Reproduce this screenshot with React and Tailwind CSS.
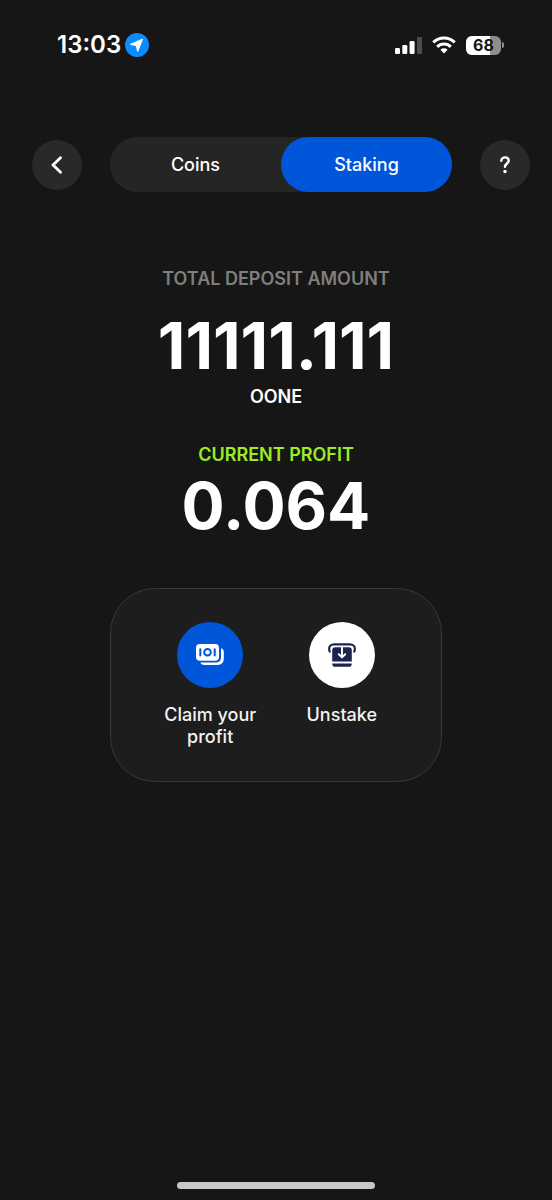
import { useState } from 'react';

const tabs = ['Coins', 'Staking'];

function SignalIcon() {
    return (
        <svg width="27" height="17" viewBox="0 0 27 17" fill="#fff" aria-hidden="true">
            <rect x="0" y="11" width="5" height="6" rx="1.3" />
            <rect x="7.3" y="8" width="5" height="9" rx="1.3" />
            <rect x="14.6" y="4" width="5" height="13" rx="1.3" />
            <rect x="22" y="0" width="5" height="17" rx="1.3" fill="#4d4d4d" />
        </svg>
    );
}

function WifiIcon() {
    return (
        <svg width="24" height="18" viewBox="0 0 24 18" fill="none" stroke="#fff" strokeWidth="3" aria-hidden="true">
            <path d="M1.3 6.4a15.2 15.2 0 0 1 21.4 0" />
            <path d="M5.2 10.8a9.8 9.8 0 0 1 13.6 0" />
            <path d="M12 17.4l-3.6-3.6a5.2 5.2 0 0 1 7.2 0z" fill="#fff" stroke="none" />
        </svg>
    );
}

function LocationIcon() {
    return (
        <svg width="24" height="24" viewBox="0 0 24 24" aria-hidden="true">
            <circle cx="12" cy="12" r="12" fill="#0a8cff" />
            <path d="M17.4 6.4 5.8 11.3l5.6 1.2 1.3 5.6z" fill="#fff" stroke="#fff" strokeWidth="1.2" strokeLinejoin="round" />
        </svg>
    );
}

function Battery({ level }) {
    return (
        <div className="flex items-center gap-px">
            <div className="relative flex h-[19px] w-[35px] items-center justify-center overflow-hidden rounded-md bg-[#8e8e8e]">
                <div className="absolute inset-y-0 left-0 bg-white" style={{ width: `${level}%` }} />
                <span className="relative text-base font-bold leading-none text-[#161616]">{level}</span>
            </div>
            <div className="h-1.5 w-0.5 rounded-r-full bg-[#8e8e8e]" />
        </div>
    );
}

function ClaimIcon() {
    return (
        <svg width="28" height="22" viewBox="0 0 28 22" fill="none" aria-hidden="true">
            <path d="M25 4.2c1.7.4 2.8 1.6 2.8 3.4v7c0 4.200-2.400 6.400-6.400 6.400H8.400c-2.200 0-3.500-.8-4-2.400h15.400c3.400 0 5.200-1.800 5.200-5z" fill="#fff" />
            <rect x="0" y="0" width="23" height="16.800" rx="3.800" fill="#fff" />
            <circle cx="11.500" cy="8.300" r="3.300" stroke="#0056d8" strokeWidth="2" />
            <path d="M4.300 5.200v6.200M18.700 5.200v6.200" stroke="#0056d8" strokeWidth="2" strokeLinecap="round" />
        </svg>
    );
}

function UnstakeIcon() {
    return (
        <svg width="28" height="24" viewBox="0 0 28 24" fill="none" aria-hidden="true">
            <path d="M1.700 8.600C.2 4.200 2 1.300 6 1.300h16c4 0 5.800 2.900 4.300 7.300" stroke="#1b2550" strokeWidth="2.200" strokeLinecap="round" />
            <path d="M4.200 7.400c0-2 1-3.200 3-3.200h13.600c2 0 3 1.200 3 3.200v11.200H4.200z" fill="#1b2550" />
            <path d="M4.200 20.400h19.600c0 2.200-1 3.400-3 3.400H7.200c-2 0-3-1.200-3-3.400z" fill="#1b2550" />
            <path d="M14 3.600v10M10.800 11.200l3.200 3.200 3.200-3.200" stroke="#fff" strokeWidth="2" strokeLinecap="round" strokeLinejoin="round" />
        </svg>
    );
}

function Action({ label, color, children }) {
    return (
        <button type="button" className="flex flex-col items-center gap-4 px-4 text-lg font-medium leading-[22px] text-[#f2f2f2]">
            <span className={`flex size-[66px] items-center justify-center rounded-full ${color}`}>
                {children}
            </span>
            {label}
        </button>
    );
}

function App() {
    const [active, setActive] = useState('Staking');

    return (
        <div className="flex min-h-screen flex-col bg-[#161616] font-['Inter',sans-serif] text-white">

            {/* --- STATUS BAR --- */}
            <div className="flex h-[90px] items-center justify-between pl-[57px] pr-12">
                <div className="flex items-center gap-1">
                    <span className="text-2xl font-semibold leading-none">13:03</span>
                    <LocationIcon />
                </div>
                <div className="flex items-center gap-2.5">
                    <SignalIcon />
                    <WifiIcon />
                    <Battery level={68} />
                </div>
            </div>

            {/* --- HEADER --- */}
            <header className="mt-[47px] flex items-center gap-7 pl-8 pr-[22px]">
                <button type="button" aria-label="Back" className="flex size-[50px] shrink-0 items-center justify-center rounded-full bg-[#292929]">
                    <svg width="12" height="18" viewBox="0 0 12 18" fill="none" stroke="#fff" strokeWidth="2.800" strokeLinecap="round" strokeLinejoin="round" aria-hidden="true">
                        <path d="M9.500 1.800 2 9l7.500 7.200" />
                    </svg>
                </button>
                <nav className="grid h-[55px] flex-1 grid-cols-2 rounded-full bg-[#252525]">
                    {tabs.map((tab) => (
                        <button
                            key={tab}
                            type="button"
                            onClick={() => setActive(tab)}
                            className={`rounded-full text-lg font-medium ${active === tab ? 'bg-[#0056d8]' : ''}`}
                        >
                            {tab}
                        </button>
                    ))}
                </nav>
                <button type="button" aria-label="Help" className="flex size-[50px] shrink-0 items-center justify-center rounded-full bg-[#292929]">
                    <svg width="12" height="18" viewBox="0 0 12 18" fill="none" stroke="#fff" strokeWidth="2.400" strokeLinecap="round" aria-hidden="true">
                        <path d="M2.300 4.800C2.300 2.700 3.900 1.400 6 1.400s3.700 1.300 3.700 3.300c0 2.700-3.700 3-3.700 6.100" />
                        <circle cx="6" cy="15.500" r="1.700" fill="#fff" stroke="none" />
                    </svg>
                </button>
            </header>

            {/* --- AMOUNTS --- */}
            <main className="flex flex-1 flex-col items-center pt-[75px] text-center">
                <h2 className="text-lg font-semibold leading-6 text-[#7f7f7f]">TOTAL DEPOSIT AMOUNT</h2>
                <p className="mt-[23px] text-[64px] font-bold leading-16">11111.111</p>
                <p className="mt-[7px] text-lg font-semibold leading-6">OONE</p>
                <h2 className="mt-[34px] text-lg font-semibold leading-6 text-[#9bec25]">CURRENT PROFIT</h2>
                <p className="mt-[7px] text-[64px] font-bold leading-16">0.064</p>

                {/* --- ACTIONS --- */}
                <div className="mt-[50px] grid w-3/5 grid-cols-2 rounded-[45px] border border-[#383838] bg-[#1d1d1d] p-[33px]">
                    <Action label="Claim your profit" color="bg-[#0056d8]">
                        <ClaimIcon />
                    </Action>
                    <Action label="Unstake" color="bg-white">
                        <UnstakeIcon />
                    </Action>
                </div>
            </main>

            <div className="mx-auto mb-[11px] h-[7px] w-[198px] rounded-full bg-[#c8c8c8]" />
        </div>
    );
}

export default App;
